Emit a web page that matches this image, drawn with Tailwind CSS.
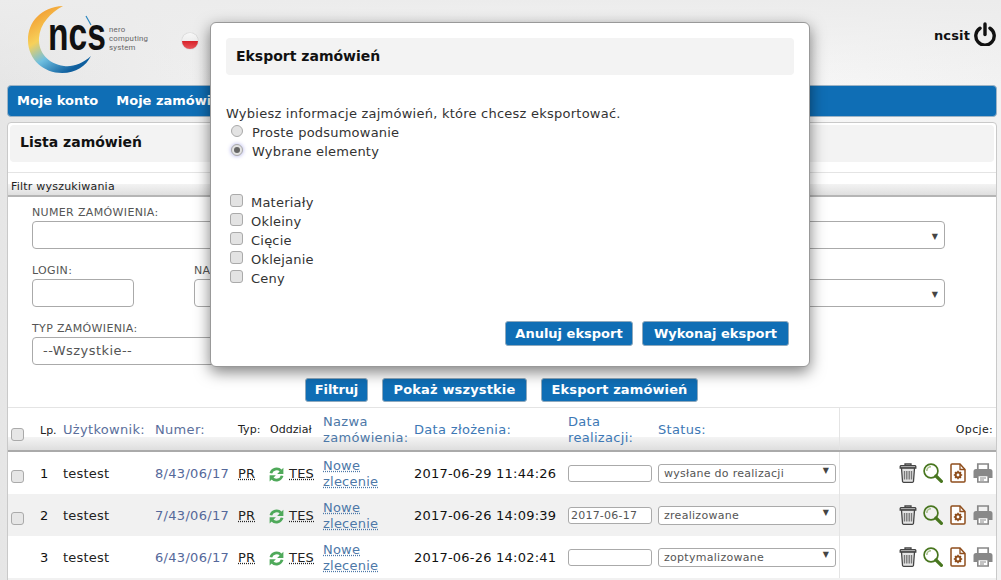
<!DOCTYPE html>
<html lang="pl">
<head>
<meta charset="UTF-8">
<title>Lista zamówień</title>
<script src="https://cdn.jsdelivr.net/npm/@tailwindcss/browser@4"></script>
</head>
<body class="bg-[#f4f4f4] font-['DejaVu_Sans',sans-serif] text-[13px] tracking-[0.22px] text-[#222]">

<!-- shared row icons -->
<svg class="hidden">
	<symbol id="i-sync" viewBox="0 0 24 24"><g fill="none" stroke="#4fa95a" stroke-width="4.4"><path d="M3 10 A9.5 9.5 0 0 1 19 6"/><path d="M21 14 A9.5 9.5 0 0 1 5 18"/></g><path d="M23 1 V11 H13 Z" fill="#4fa95a"/><path d="M1 23 V13 H11 Z" fill="#4fa95a"/></symbol>
	<symbol id="i-trash" viewBox="0 0 18 20"><g fill="none" stroke="#444" stroke-width="1.3"><path d="M6 2.5 V1 H12 V2.5"/><path d="M1.2 5 V3.4 A1 1 0 0 1 2.2 2.6 H15.8 A1 1 0 0 1 16.8 3.4 V5 Z" fill="#ccc"/><path d="M2.5 5.2 L3.5 18 A1.2 1.2 0 0 0 4.7 19.3 H13.3 A1.2 1.2 0 0 0 14.5 18 L15.5 5.2 Z" fill="#e4e4e4"/></g><path d="M5.5 8 V16.5 M7.8 8 V16.5 M10.2 8 V16.5 M12.5 8 V16.5" stroke="#777" stroke-width="1.4" fill="none"/></symbol>
	<symbol id="i-search" viewBox="0 0 20 20"><g fill="none" stroke="#48761f"><circle cx="8" cy="8" r="6.9" stroke-width="1.7"/><path d="M3.8 8 A4.2 4.2 0 0 1 8 3.8" stroke="#a7c08c" stroke-width="1.6"/><path d="M13 13 L18.4 18.4" stroke-width="3.2" stroke-linecap="round"/></g></symbol>
	<symbol id="i-doc" viewBox="0 0 16 20"><path d="M1 2 A1 1 0 0 1 2 1 H10 L15 6.5 V18 A1 1 0 0 1 14 19 H2 A1 1 0 0 1 1 18 Z" fill="#fff" stroke="#8f4e1c" stroke-width="1.5"/><path d="M10 1 V6.5 H15" fill="none" stroke="#8f4e1c" stroke-width="1.3"/><circle cx="8" cy="12" r="2.4" fill="none" stroke="#8f4e1c" stroke-width="2"/><path d="M8 7.8 V9.5 M8 14.5 V16.2 M3.8 12 H5.5 M10.5 12 H12.2 M5 9 L6.2 10.2 M9.8 13.8 L11 15 M11 9 L9.8 10.2 M6.2 13.8 L5 15" stroke="#8f4e1c" stroke-width="1.5"/></symbol>
	<symbol id="i-print" viewBox="0 0 20 20"><path d="M4.8 7 V1 H15.2 V7" fill="none" stroke="#888" stroke-width="1.7"/><path d="M3 6 H17 A2.5 2.5 0 0 1 19.5 8.5 V15 H16 V12 H4 V15 H0.5 V8.5 A2.5 2.5 0 0 1 3 6Z" fill="#888"/><path d="M4.8 12.5 H15.2 V19 H4.8 Z" fill="#fff" stroke="#888" stroke-width="1.6"/><path d="M7 15 H13 M7 17 H11" stroke="#888"/></symbol>
</svg>

<div class="relative w-[1001px] h-[580px] overflow-hidden bg-gradient-to-r from-[#e6e6e6] via-[#fdfdfd] to-[#f2f2f2]">

	<!-- header -->
	<header class="flex h-[85px] relative bg-gradient-to-b from-[#ececec] to-transparent">
		<svg class="absolute left-[26px] top-[4px]" width="130" height="70" viewBox="0 0 130 70">
			<defs>
				<linearGradient id="ring" x1="0" y1="0" x2="0.6" y2="1">
					<stop offset="0" stop-color="#f08a24"/>
					<stop offset="0.45" stop-color="#f7d15a"/>
					<stop offset="0.7" stop-color="#6fbfe0"/>
					<stop offset="1" stop-color="#0f5f9e"/>
				</linearGradient>
			</defs>
			<path d="M37 2 C15 3 2 18 2 36 C2 56 18 69 36 69 C50 69 60 62 65 52 C56 60 47 63 38 62 C22 60 12 48 13 34 C14 20 24 9 37 2Z" fill="url(#ring)"/>
			<path d="M60 12 L65 21" stroke="#2a86c0" stroke-width="1.2"/>
			<text transform="translate(22 46) scale(0.73 1)" font-family="Liberation Sans" font-weight="700" font-size="46" letter-spacing="0" fill="#111">ncs</text>
			<text x="83" y="27.5" font-family="Roboto" font-size="7.8" fill="#666">nero</text>
			<text x="83" y="36.8" font-family="Roboto" font-size="7.8" fill="#666">computing</text>
			<text x="83" y="46.1" font-family="Roboto" font-size="7.8" fill="#666">system</text>
		</svg>
		<span class="absolute left-[182px] top-[33px] w-4 h-4 rounded-full bg-[linear-gradient(to_bottom,#f7f7f7_0,#eee_50%,#d9222a_50%,#e8565c_100%)] shadow-[0_0_1px_#888]"></span>
		<span class="absolute left-[210px] top-[33px] w-4 h-4 rounded-full bg-[#44607a]"></span>
		<div class="absolute right-[4px] top-[22px] flex items-center gap-[3px]">
			<span class="mt-[3px] font-bold text-[13px] tracking-[0.15px] text-[#111]">ncsit</span>
			<svg width="24" height="24" viewBox="0 0 24 24" fill="none" stroke="#111" stroke-width="3.4" stroke-linecap="round">
				<path d="M7 6.2 A9.2 9.2 0 1 0 17 6.2"/>
				<path d="M12 2 V12.5"/>
			</svg>
		</div>
	</header>

	<!-- nav -->
	<nav class="ml-[7px] mr-[4px] h-[32px] flex items-center gap-[18px] pl-[9px] bg-[#0f6eb5] border border-[#9db4c6] rounded-[4px] text-white font-bold tracking-normal">
		<a>Moje konto</a>
		<a>Moje zamówienia</a>
	</nav>

	<!-- main card -->
	<main class="mt-[5px] ml-[7px] mr-[4px] h-[470px] bg-white border border-[#c9c9c9] rounded-t-[4px]">
		<div class="mx-[2px] mt-[2px] h-[37px] flex items-center pl-[10px] pb-[2px] bg-[#f3f3f3] rounded-[4px] font-bold text-[14px] tracking-normal text-[#111]">Lista zamówień</div>
		<div class="mt-[10px] h-[25px] border-t border-b-2 border-t-[#e4e4e4] border-b-[#b5b5b5] pt-[6px] pl-[3px] text-[11px] text-[#222] bg-[linear-gradient(to_bottom,#fff_0,#fff_11px,#f3f3f3_11px,#dfdfdf_100%)]">Filtr wyszukiwania</div>

		<!-- filter -->
		<section class="pl-[24px] w-[937px] pt-[8px] h-[181px] text-[#555]">
			<div class="flex justify-between h-[58px]">
				<div>
					<label class="block h-[16px] text-[11px] leading-[16px] tracking-[0.35px]">NUMER ZAMÓWIENIA:</label>
					<input class="block w-[300px] h-[28px] bg-white border border-[#aaa] rounded-[4px]">
				</div>
				<div class="relative mt-[16px] w-[300px] h-[28px] border border-[#aaa] rounded-[4px]">
					<span class="absolute right-[6px] top-[9px] text-[8px] text-[#444]">▼</span>
				</div>
			</div>
			<div class="flex h-[58px]">
				<div>
					<label class="block h-[16px] text-[11px] leading-[16px] tracking-[0.35px]">LOGIN:</label>
					<input class="block w-[102px] h-[28px] bg-white border border-[#aaa] rounded-[4px]">
				</div>
				<div class="ml-[60px]">
					<label class="block h-[16px] text-[11px] leading-[16px] tracking-[0.35px]">NAZWA:</label>
					<input class="block w-[200px] h-[28px] bg-white border border-[#aaa] rounded-[4px]">
				</div>
				<div class="relative ml-auto mt-[16px] w-[300px] h-[28px] border border-[#aaa] rounded-[4px]">
					<span class="absolute right-[6px] top-[9px] text-[8px] text-[#444]">▼</span>
				</div>
			</div>
			<div>
				<label class="block h-[16px] text-[11px] leading-[16px] tracking-[0.35px]">TYP ZAMÓWIENIA:</label>
				<div class="w-[300px] h-[28px] flex items-center pl-[10px] border border-[#aaa] rounded-[4px] tracking-[0.45px] text-[#555]">--Wszystkie--</div>
			</div>
		</section>

		<!-- buttons -->
		<div class="flex pl-[297px] h-[29px]">
			<button class="h-[24px] w-[63px] bg-[#0f6eb5] border border-[#8fa9bd] rounded-[3px] text-white font-bold tracking-[-0.1px]">Filtruj</button>
			<button class="h-[24px] w-[145px] ml-[14px] bg-[#0f6eb5] border border-[#8fa9bd] rounded-[3px] text-white font-bold tracking-[0.15px]">Pokaż wszystkie</button>
			<button class="h-[24px] w-[157px] ml-[14px] bg-[#0f6eb5] border border-[#8fa9bd] rounded-[3px] text-white font-bold tracking-[0.12px]">Eksport zamówień</button>
		</div>

		<!-- table head -->
		<div class="grid grid-cols-[32px_23px_92px_83px_32px_53px_91px_154px_90px_182px_1fr] items-center h-[45px] pt-[2px] tracking-[0.32px] border-t border-b-2 border-t-[#e4e4e4] border-b-[#aaa] bg-[linear-gradient(to_bottom,#fff_0,#fff_29px,#f4f4f4_29px,#dedede_100%)]">
			<span class="ml-[3px] mt-[8px] w-[13px] h-[13px] bg-[#e6e6e6] border border-[#aaa] rounded-[3px]"></span>
			<span class="text-[11px] tracking-normal mt-[3px]">Lp.</span>
			<span class="text-[#5b6f9c]">Użytkownik:</span>
			<span class="text-[#5b6f9c]">Numer:</span>
			<span class="text-[11px] tracking-[0.1px]">Typ:</span>
			<span class="text-[11px] tracking-[0.05px]">Oddział</span>
			<span class="text-[#4d78a8] leading-[16px]">Nazwa zamówienia:</span>
			<span class="text-[#3d78b5]">Data złożenia:</span>
			<span class="text-[#3d78b5] leading-[16px]">Data realizacji:</span>
			<span class="text-[#3d78b5] self-stretch -mt-[2px] pt-[2px] border-r border-[#e4e4e4] flex items-center">Status:</span>
			<span class="text-[11px] text-right pr-[3px] mt-[1px]">Opcje:</span>
		</div>

		<!-- rows -->
		<div class="grid grid-cols-[32px_23px_92px_83px_32px_53px_91px_154px_90px_182px_1fr] items-center h-[42px] pt-[2px]">
			<span class="ml-[3px] mt-[5px] w-[13px] h-[13px] bg-[#e6e6e6] border border-[#aaa] rounded-[3px]"></span>
			<span class="text-[#111]">1</span>
			<span>testest</span>
			<span class="text-[#55689a] tracking-[0.3px]">8/43/06/17</span>
			<span class="underline decoration-dotted">PR</span>
			<span class="flex items-center gap-[5px] -ml-[1px]">
				<svg width="15" height="15"><use href="#i-sync"/></svg>
				<span class="underline decoration-dotted">TES</span>
			</span>
			<span class="text-[#4d78a8] leading-[16px] underline decoration-dotted">Nowe zlecenie</span>
			<span class="text-[#111]">2017-06-29 11:44:26</span>
			<input class="w-[84px] h-[17px] -mt-[2px] px-[2px] bg-white border border-[#aaa] rounded-[3px] text-[11px]">
			<div class="relative self-stretch -mt-[2px] flex items-center border-r border-[#e4e4e4]">
				<div class="w-[178px] h-[19px] pl-[5px] border border-[#aaa] rounded-[3px] bg-white text-[11px] tracking-[0.28px] text-[#555] leading-[17px]">wysłane do realizacji</div>
				<span class="absolute right-[10px] top-[13px] text-[8px] text-[#444]">▼</span>
			</div>
			<div class="flex items-center justify-end gap-[7px] pr-[3px] -mt-[2px]">
				<svg class="-mr-[1px]" width="18" height="20"><use href="#i-trash"/></svg>
				<svg width="20" height="20"><use href="#i-search"/></svg>
				<svg width="16" height="20"><use href="#i-doc"/></svg>
				<svg width="20" height="20"><use href="#i-print"/></svg>
			</div>
		</div>
		<div class="grid grid-cols-[32px_23px_92px_83px_32px_53px_91px_154px_90px_182px_1fr] items-center h-[42px] pt-[2px] bg-[#f1f1f1]">
			<span class="ml-[3px] mt-[5px] w-[13px] h-[13px] bg-[#e6e6e6] border border-[#aaa] rounded-[3px]"></span>
			<span class="text-[#111]">2</span>
			<span>testest</span>
			<span class="text-[#55689a] tracking-[0.3px]">7/43/06/17</span>
			<span class="underline decoration-dotted">PR</span>
			<span class="flex items-center gap-[5px] -ml-[1px]">
				<svg width="15" height="15"><use href="#i-sync"/></svg>
				<span class="underline decoration-dotted">TES</span>
			</span>
			<span class="text-[#4d78a8] leading-[16px] underline decoration-dotted">Nowe zlecenie</span>
			<span class="text-[#111]">2017-06-26 14:09:39</span>
			<input value="2017-06-17" class="w-[84px] h-[17px] -mt-[2px] px-[2px] bg-white border border-[#aaa] rounded-[3px] text-[11px] text-[#555]">
			<div class="relative self-stretch -mt-[2px] flex items-center border-r border-[#e4e4e4]">
				<div class="w-[178px] h-[19px] pl-[5px] border border-[#aaa] rounded-[3px] bg-white text-[11px] tracking-[0.28px] text-[#555] leading-[17px]">zrealizowane</div>
				<span class="absolute right-[10px] top-[13px] text-[8px] text-[#444]">▼</span>
			</div>
			<div class="flex items-center justify-end gap-[7px] pr-[3px] -mt-[2px]">
				<svg class="-mr-[1px]" width="18" height="20"><use href="#i-trash"/></svg>
				<svg width="20" height="20"><use href="#i-search"/></svg>
				<svg width="16" height="20"><use href="#i-doc"/></svg>
				<svg width="20" height="20"><use href="#i-print"/></svg>
			</div>
		</div>
		<div class="grid grid-cols-[32px_23px_92px_83px_32px_53px_91px_154px_90px_182px_1fr] items-center h-[42px] pt-[2px]">
			<span></span>
			<span class="text-[#111]">3</span>
			<span>testest</span>
			<span class="text-[#55689a] tracking-[0.3px]">6/43/06/17</span>
			<span class="underline decoration-dotted">PR</span>
			<span class="flex items-center gap-[5px] -ml-[1px]">
				<svg width="15" height="15"><use href="#i-sync"/></svg>
				<span class="underline decoration-dotted">TES</span>
			</span>
			<span class="text-[#4d78a8] leading-[16px] underline decoration-dotted">Nowe zlecenie</span>
			<span class="text-[#111]">2017-06-26 14:02:41</span>
			<input class="w-[84px] h-[17px] -mt-[2px] px-[2px] bg-white border border-[#aaa] rounded-[3px] text-[11px]">
			<div class="relative self-stretch -mt-[2px] flex items-center border-r border-[#e4e4e4]">
				<div class="w-[178px] h-[19px] pl-[5px] border border-[#aaa] rounded-[3px] bg-white text-[11px] tracking-[0.28px] text-[#555] leading-[17px]">zoptymalizowane</div>
				<span class="absolute right-[10px] top-[13px] text-[8px] text-[#444]">▼</span>
			</div>
			<div class="flex items-center justify-end gap-[7px] pr-[3px] -mt-[2px]">
				<svg class="-mr-[1px]" width="18" height="20"><use href="#i-trash"/></svg>
				<svg width="20" height="20"><use href="#i-search"/></svg>
				<svg width="16" height="20"><use href="#i-doc"/></svg>
				<svg width="20" height="20"><use href="#i-print"/></svg>
			</div>
		</div>
		<div class="h-[4px] bg-[#f1f1f1]"></div>
	</main>

	<!-- modal -->
	<div class="absolute left-[210px] top-[22px] w-[600px] h-[345px] bg-white border border-[#999] rounded-[6px] shadow-[0_5px_15px_rgba(0,0,0,0.5)] p-[15px] text-[#333]">
		<div class="h-[37px] flex items-center pl-[10px] bg-[#f3f3f3] rounded-[4px] font-bold text-[14px] tracking-normal text-[#111]">Eksport zamówień</div>
		<p class="mt-[29px] leading-[19px] tracking-[0.24px]">Wybiesz informacje zajmówień, które chcesz eksportować.</p>
		<div class="flex items-center h-[19px] pl-[5px] gap-[9px]">
			<span class="w-[12px] h-[12px] -mt-[4px] rounded-full bg-[#e3e3e3] border border-[#aaa]"></span>
			<span>Proste podsumowanie</span>
		</div>
		<div class="flex items-center h-[19px] pl-[5px] gap-[9px]">
			<span class="w-[12px] h-[12px] -mt-[4px] rounded-full bg-[#e3e3e3] border border-[#aaa] flex items-center justify-center shadow-[0_0_4px_#a8a8e8]"><span class="w-[6px] h-[6px] rounded-full bg-[#666]"></span></span>
			<span>Wybrane elementy</span>
		</div>
		<div class="mt-[32px] flex flex-col">
			<div class="flex items-center h-[19px] pl-[4px] gap-[8px]"><span class="w-[13px] h-[13px] -mt-[5px] bg-[#e3e3e3] border border-[#aaa] rounded-[3px]"></span><span>Materiały</span></div>
			<div class="flex items-center h-[19px] pl-[4px] gap-[8px]"><span class="w-[13px] h-[13px] -mt-[5px] bg-[#e3e3e3] border border-[#aaa] rounded-[3px]"></span><span>Okleiny</span></div>
			<div class="flex items-center h-[19px] pl-[4px] gap-[8px]"><span class="w-[13px] h-[13px] -mt-[5px] bg-[#e3e3e3] border border-[#aaa] rounded-[3px]"></span><span>Cięcie</span></div>
			<div class="flex items-center h-[19px] pl-[4px] gap-[8px]"><span class="w-[13px] h-[13px] -mt-[5px] bg-[#e3e3e3] border border-[#aaa] rounded-[3px]"></span><span>Oklejanie</span></div>
			<div class="flex items-center h-[19px] pl-[4px] gap-[8px]"><span class="w-[13px] h-[13px] -mt-[5px] bg-[#e3e3e3] border border-[#aaa] rounded-[3px]"></span><span>Ceny</span></div>
		</div>
		<div class="mt-[33px] flex justify-end gap-[9px] pr-[5px]">
			<button class="h-[25px] w-[128px] bg-[#0f6eb5] border border-[#8fa9bd] rounded-[3px] text-white font-bold tracking-normal">Anuluj eksport</button>
			<button class="h-[25px] w-[147px] bg-[#0f6eb5] border border-[#8fa9bd] rounded-[3px] text-white font-bold tracking-normal">Wykonaj eksport</button>
		</div>
	</div>
</div>
</body>
</html>
